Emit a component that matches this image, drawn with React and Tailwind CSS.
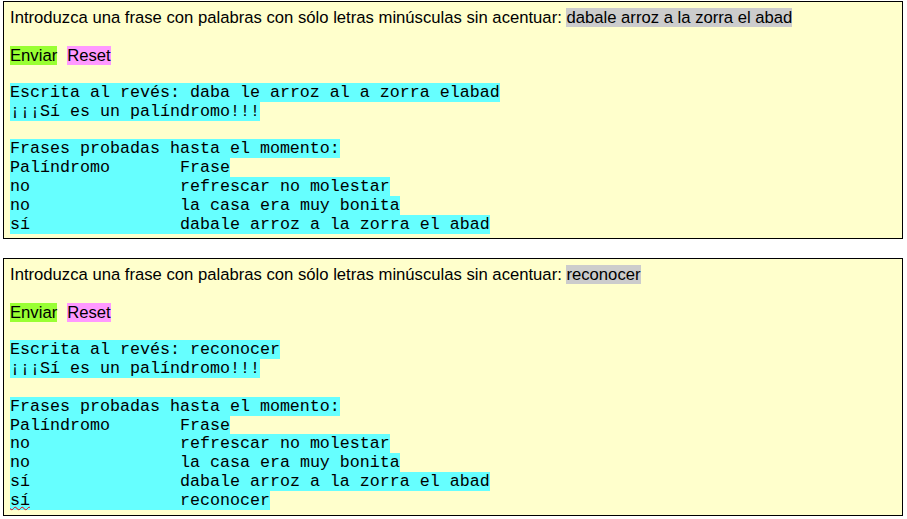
import React from "react";

const sans = { fontFamily: '"Liberation Sans", Arial, sans-serif' };
const mono = { fontFamily: '"Liberation Mono", "Courier New", monospace' };

function Panel({ input, reversed, rows, lastWavy }) {
  return (
    <div className="w-[900px] border border-black bg-[#ffffcc] pl-[6px] pr-[6px] pt-[6px] pb-[4px] text-black">
      <div className="text-[16.67px] leading-[19px]" style={sans}>
        Introduzca una frase con palabras con sólo letras minúsculas sin acentuar:{" "}
        <span className="bg-[#cccccc]">{input}</span>
      </div>
      <div className="h-[19px]" />
      <div className="flex gap-[10px] text-[16.67px] leading-[19px]" style={sans}>
        <span className="bg-[#99ff33]">Enviar</span>
        <span className="bg-[#ff99ff]">Reset</span>
      </div>
      <div className="h-[19px]" />
      <div className="whitespace-pre text-[16.67px] leading-[18.8px]" style={mono}>
        <div>
          <span className="bg-[#66ffff]">Escrita al revés: {reversed}</span>
        </div>
        <div>
          <span className="bg-[#66ffff]">¡¡¡Sí es un palíndromo!!!</span>
        </div>
        <div className="h-[18.8px]" />
        <div>
          <span className="bg-[#66ffff]">Frases probadas hasta el momento:</span>
        </div>
        <div>
          <span className="bg-[#66ffff]">{"Palíndromo       Frase"}</span>
        </div>
        {rows.map(([p, f], i) => {
          const wavy = lastWavy && i === rows.length - 1;
          return (
            <div key={i}>
              <span className="bg-[#66ffff]">
                <span className={wavy ? "underline decoration-wavy decoration-red-600 decoration-1" : ""}>{p}</span>
                {" ".repeat(17 - p.length)}
                {f}
              </span>
            </div>
          );
        })}
      </div>
    </div>
  );
}

export default function App() {
  const base = [
    ["no", "refrescar no molestar"],
    ["no", "la casa era muy bonita"],
    ["sí", "dabale arroz a la zorra el abad"],
  ];
  return (
    <div className="bg-white min-h-[519px] pl-[3px] pt-[1px] flex flex-col gap-[19px]">
      <Panel
        input="dabale arroz a la zorra el abad"
        reversed="daba le arroz al a zorra elabad"
        rows={base}
      />
      <Panel
        input="reconocer"
        reversed="reconocer"
        rows={[...base, ["sí", "reconocer"]]}
        lastWavy
      />
    </div>
  );
}
